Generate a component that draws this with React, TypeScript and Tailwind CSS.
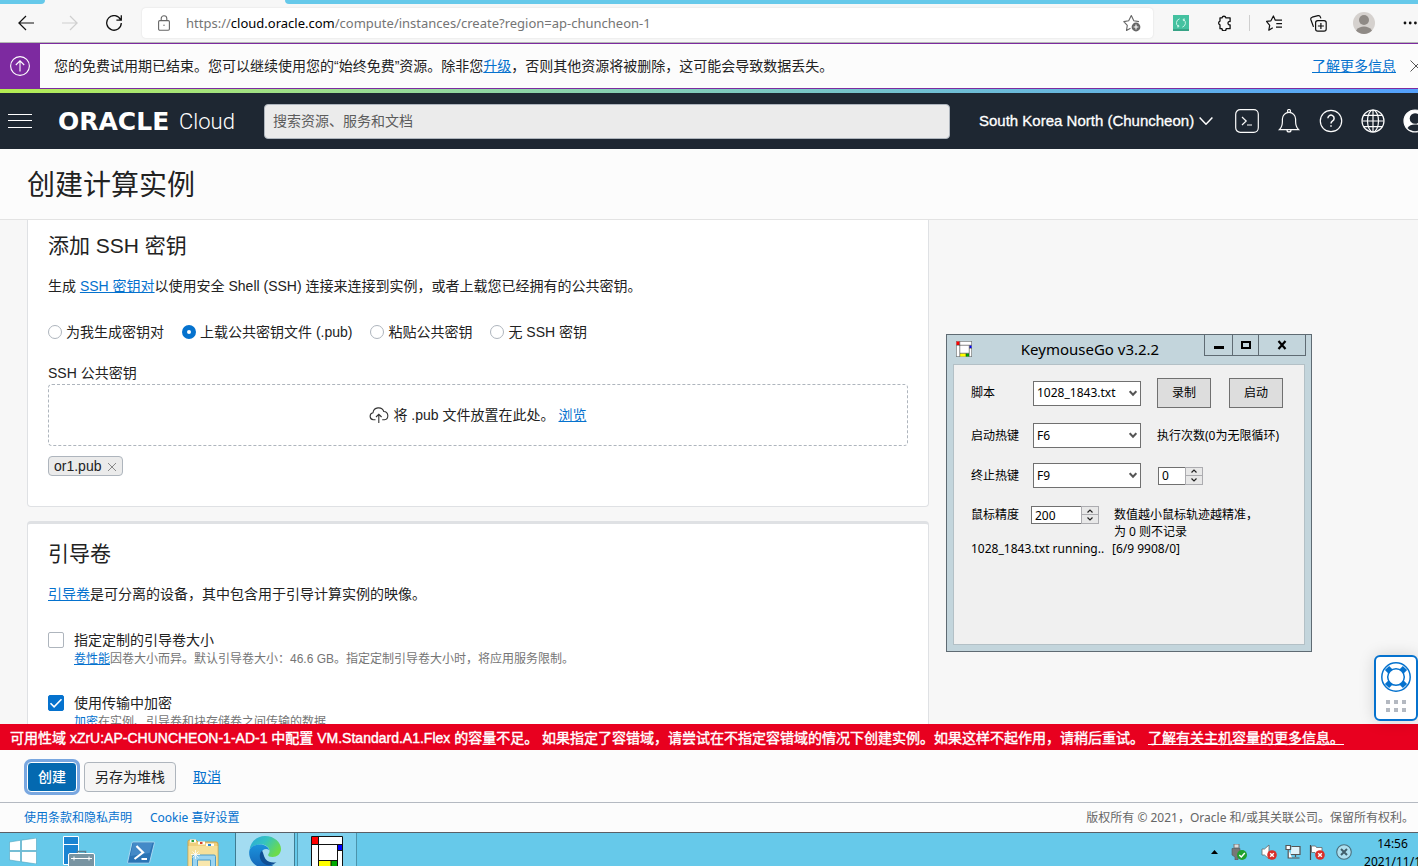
import { useState, type ReactNode } from "react";

const UI_FONT = "font-['Noto_Sans','Noto_Sans_CJK_SC',sans-serif]";

const KEY_OPTIONS = [
  { id: "generate", label: "为我生成密钥对" },
  { id: "upload", label: "上载公共密钥文件 (.pub)" },
  { id: "paste", label: "粘贴公共密钥" },
  { id: "none", label: "无 SSH 密钥" },
];

function BrowserBar() {
  return (
    <div className={`shrink-0 ${UI_FONT}`}>
      <div className="flex h-1 bg-[#f7f7f7]">
        <div className="w-[45px] rounded-br bg-[#66c9ea]" />
        <div className="w-[240px]" />
        <div className="flex-1 rounded-bl bg-[#66c9ea]" />
      </div>
      <div className="flex h-[39px] items-center border-b border-[#b4b9b4] bg-[#f7f7f7] pl-[18px]">
        <button type="button" aria-label="Back" className="mr-7">
          <svg className="size-4" viewBox="0 0 16 16" fill="none" stroke="#111" strokeWidth="1.2">
            <path d="M16 8H.8M8 1L.9 8l7.1 7" />
          </svg>
        </button>
        <button type="button" aria-label="Forward" className="mr-7">
          <svg className="size-4" viewBox="0 0 16 16" fill="none" stroke="#cfcfcf" strokeWidth="1.2">
            <path d="M0 8h15.2M8 1l7.1 7L8 15" />
          </svg>
        </button>
        <button type="button" aria-label="Refresh" className="mr-5">
          <svg className="size-4" viewBox="0 0 16 16" fill="none" stroke="#111" strokeWidth="1.3">
            <path d="M14.6 4.8A7.3 7.3 0 1 0 15.3 8M15.3.3v4.9h-4.9" />
          </svg>
        </button>
        <div className="flex h-[30px] min-w-0 flex-1 items-center rounded bg-white px-4 shadow-[0_0_2px_rgba(0,0,0,0.12)]">
          <svg className="mr-4 h-4 w-3 shrink-0" viewBox="0 0 12 16" fill="none" stroke="#666" strokeWidth="1.1">
            <rect x=".6" y="5.6" width="10.8" height="9.6" rx="1.2" />
            <path d="M3.2 5.5V3.6a2.8 2.8 0 0 1 5.6 0v1.9" />
            <circle cx="6" cy="10.2" r=".7" fill="#666" stroke="none" />
          </svg>
          <div className="min-w-0 flex-1 truncate text-[13px] leading-5 text-[#757575]">
            https://<span className="text-black">cloud.oracle.com</span>/compute/instances/create?region=ap-chuncheon-1
          </div>
          <button type="button" aria-label="Add to favorites" className="-mr-1">
            <svg className="size-[18px]" viewBox="0 0 18 18" fill="none" stroke="#666" strokeWidth="1.1">
              <path d="M7.5 14.2l-4 2.2.8-5L.8 7.6l4.9-.8L8.3 1.5l2.5 5.2 5.2.9" strokeLinejoin="round" />
              <circle cx="13" cy="13" r="4.4" fill="#666" stroke="none" />
              <path d="M13 10.6v4.8M10.6 13h4.8" stroke="#fff" />
            </svg>
          </button>
        </div>
        <div className="flex shrink-0 items-center pl-5">
          <button type="button" aria-label="Extension" className="mr-7">
            <svg className="size-4" viewBox="0 0 16 16" fill="none">
              <path d="M0 0h16v16H0z" fill="#44c1a0" />
              <path d="M0 14h16v2H0z" fill="#37a386" />
              <path d="M6.6 3.8A4.3 4.3 0 0 0 5.5 11.6M9.4 12.1A4.3 4.3 0 0 0 10.5 4.4M4 11.9l1.8-.1-.3-1.9M12 4.1l-1.8.1.3 1.9" stroke="#c9f5e7" strokeWidth="1" />
            </svg>
          </button>
          <button type="button" aria-label="Extensions" className="mr-4">
            <svg className="size-4" viewBox="0 0 16 16" fill="none" stroke="#111" strokeWidth="1.3" strokeLinejoin="round">
              <path d="M5 2.800a2 2 0 0 1 3.900 0h4.200v3.700a1.700 1.700 0 1 0 0 3.300v3.900H9.200a2.100 2.100 0 0 1-4.200 0H3V9.900a2 2 0 0 1 0-3.800V2.800z" />
            </svg>
          </button>
          <div className="mr-4 h-4 w-px bg-[#cfcfcf]" />
          <button type="button" aria-label="Favorites" className="mr-7">
            <svg className="size-4" viewBox="0 0 16 16" fill="none" stroke="#111" strokeWidth="1.2" strokeLinejoin="round">
              <path d="M6.8 12.7l-4 2.5.9-4.9L.5 6.400l4.400-.6L7.400 1l1.900 4.200H16M10.300 8.600H16M10 12.200h6" />
            </svg>
          </button>
          <button type="button" aria-label="Collections" className="mr-[26px]">
            <svg className="size-[17px]" viewBox="0 0 17 17" fill="none" stroke="#111" strokeWidth="1.2">
              <rect x="5.6" y="5.6" width="10.6" height="10.6" rx="2.2" />
              <path d="M10.9 8v6M7.9 11h6M3.5 11.9L.9 4.7a2 2 0 0 1 1.3-2.5L8 .7a2 2 0 0 1 2.4 1.4l.5 1.3" />
            </svg>
          </button>
          <button type="button" aria-label="Profile" className="mr-7">
            <svg className="size-[22px]" viewBox="0 0 22 22">
              <circle cx="11" cy="11" r="11" fill="#d5d1ce" />
              <circle cx="11" cy="8" r="5" fill="#8f8a86" />
              <path d="M3 18.5c2-3 5-4 8-4s6 1 8 4a11 11 0 0 1-16 0z" fill="#8f8a86" />
            </svg>
          </button>
          <button type="button" aria-label="Settings and more">
            <svg className="h-4 w-[15px]" viewBox="0 0 15 16" fill="#111">
              <circle cx="2" cy="8" r="1.4" />
              <circle cx="7.2" cy="8" r="1.4" />
              <circle cx="12.4" cy="8" r="1.4" />
            </svg>
          </button>
        </div>
      </div>
    </div>
  );
}

function TrialBanner() {
  return (
    <div className="flex h-[46px] shrink-0 items-center border-y border-[#7d2aa0] bg-[#fcfcfc]">
      <div className="flex w-10 shrink-0 items-center justify-center self-stretch bg-[#7d2aa0]">
        <svg className="size-5" viewBox="0 0 20 20" fill="none" stroke="#fff" strokeWidth="1.1">
          <circle cx="10" cy="10" r="9.4" />
          <path d="M10 15.5V5M5.8 9L10 4.8 14.2 9" />
        </svg>
      </div>
      <p className="min-w-0 flex-1 truncate pl-[14px] text-sm">
        您的免费试用期已结束。您可以继续使用您的“始终免费”资源。除非您
        <a href="#upgrade" className="text-[#0572ce] underline">升级</a>
        ，否则其他资源将被删除，这可能会导致数据丢失。
      </p>
      <a href="#learn-more" className="mr-3.5 shrink-0 text-sm text-[#0572ce] underline">了解更多信息</a>
      <button type="button" aria-label="关闭" className="-mr-1 shrink-0">
        <svg className="size-3" viewBox="0 0 12 12" fill="none" stroke="#555" strokeWidth="1">
          <path d="M.5.5l11 11M11.5.5l-11 11" />
        </svg>
      </button>
    </div>
  );
}

function NavIcon({ label, children }: { label: string; children: ReactNode }) {
  return (
    <button type="button" aria-label={label} className="shrink-0">
      <svg className="size-6" viewBox="0 0 24 24" fill="none" stroke="#fcfcfc" strokeWidth="1.2">
        {children}
      </svg>
    </button>
  );
}

function ConsoleHeader() {
  return (
    <header className="shrink-0">
      <div className="h-1 bg-linear-to-r from-[#b4ec51] to-[#53a0fd]" />
      <div className="flex h-14 items-center bg-[#1e2732] pl-2 text-white">
        <button type="button" aria-label="导航菜单" className="mr-[26px] shrink-0">
          <svg className="h-3.5 w-6" viewBox="0 0 24 14" stroke="#fff" strokeWidth="1">
            <path d="M0 .5h24M0 6.5h24M0 13.5h24" />
          </svg>
        </button>
        <a href="#home" className="flex w-[177px] shrink-0 items-center pt-0.5">
          <span className="w-[121px] font-['DejaVu_Sans',sans-serif] text-[25px] leading-6 font-bold">ORACLE</span>
          <span className="font-['Roboto',sans-serif] text-[22px] leading-6 font-light">Cloud</span>
        </a>
        <input
          type="search"
          aria-label="搜索"
          placeholder="搜索资源、服务和文档"
          className="ml-[29px] h-[35px] min-w-0 flex-1 rounded border border-[#aeb5bd] bg-[#ebebeb] px-2 text-sm text-[#222] placeholder:text-[#5c5c5c]"
        />
        <button type="button" className="ml-[29px] flex shrink-0 items-center gap-1 text-[15px]">
          <span className="w-[216px] text-left whitespace-nowrap [-webkit-text-stroke:0.3px_white]">South Korea North (Chuncheon)</span>
          <svg className="h-2 w-3.5" viewBox="0 0 14 8" fill="none" stroke="#fff" strokeWidth="1.5">
            <path d="M.6.6L7 7.2 13.4.6" />
          </svg>
        </button>
        <div className="-mr-[9px] ml-[22px] flex shrink-0 gap-[18px]">
          <NavIcon label="Cloud Shell">
            <rect x=".7" y=".7" width="22.6" height="22.6" rx="4.5" />
            <path d="M7 8l4.2 4L7 16M12 16h5" />
          </NavIcon>
          <NavIcon label="公告">
            <path d="M2.4 20.7c2-2 3-4 3-8.200V10a6.600 6.600 0 0 1 13.200 0v2.500c0 4.200 1 6.200 3 8.200zM10 20.900a2 2 0 0 0 4 0" />
            <circle cx="12" cy="2" r="1.500" />
          </NavIcon>
          <NavIcon label="帮助">
            <circle cx="12" cy="12" r="10.700" />
            <path d="M8.900 9.300a3.100 3.100 0 1 1 4.700 2.600c-1.100.700-1.600 1.200-1.600 2.600M12 16.200v1.600" strokeWidth="1.500" />
          </NavIcon>
          <NavIcon label="语言">
            <circle cx="12" cy="12" r="11" />
            <ellipse cx="12" cy="12" rx="5.500" ry="11" />
            <path d="M12 1v22M1 12h22M3 6.300h18M3 17.700h18" />
          </NavIcon>
          <NavIcon label="概要信息">
            <circle cx="12" cy="12" r="11" fill="#fff" />
            <circle cx="12" cy="9.500" r="5.300" fill="#1e2732" stroke="none" />
            <path d="M4.500 19c1.500-2.500 4-3.500 7.500-3.500s6 1 7.500 3.500a10.500 10.500 0 0 1-15 0z" fill="#1e2732" stroke="none" />
          </NavIcon>
        </div>
      </div>
    </header>
  );
}

function SshKeysCard() {
  const [selected, setSelected] = useState("upload");

  return (
    <section className="rounded-b border border-t-0 border-[#dfe1e4] bg-white px-5 pt-3 pb-[30px]">
      <h2 className="text-[21px] leading-7">添加 SSH 密钥</h2>
      <p className="mt-4">
        生成 <a href="#ssh-key-pair" className="text-[#0572ce] underline">SSH 密钥对</a>
        以使用安全 Shell (SSH) 连接来连接到实例，或者上载您已经拥有的公共密钥。
      </p>
      <div role="radiogroup" aria-label="SSH 密钥选项" className="mt-[26px] flex gap-[18px]">
        {KEY_OPTIONS.map((option) => (
          <label key={option.id} className="flex items-center gap-1">
            <input
              type="radio"
              name="ssh-key"
              value={option.id}
              checked={selected === option.id}
              onChange={() => setSelected(option.id)}
              className="size-3.5 appearance-none rounded-full border border-[#aeb5bd] bg-white checked:border-[5px] checked:border-[#0572ce]"
            />
            {option.label}
          </label>
        ))}
      </div>
      <p className="mt-[21px]">SSH 公共密钥</p>
      <div className="mt-px flex h-[62px] items-center justify-center rounded-sm border border-dashed border-[#aeb5bd]">
        <svg className="mr-1 h-4 w-5" viewBox="0 0 20 16" fill="none" stroke="#333" strokeWidth="1.1">
          <path d="M6.500 12.800H4.300A3.600 3.600 0 0 1 4 5.700 5.600 5.600 0 0 1 14.800 4.500a4.200 4.200 0 0 1 .700 8.300h-2.300M9.800 16V7.500M7 10l2.800-2.700L12.600 10" />
        </svg>
        <span>将 .pub 文件放置在此处。</span>
        <a href="#browse" className="ml-1 text-[#0572ce] underline">浏览</a>
      </div>
      <div className="mt-2.5 flex">
        <span className="flex h-5 items-center rounded-sm border border-[#aeb5bd] bg-[#ebebeb] px-[5px]">
          or1.pub
          <button type="button" aria-label="删除 or1.pub" className="ml-1.5">
            <svg className="mt-0.5 size-2.5" viewBox="0 0 10 10" stroke="#888" strokeWidth="1">
              <path d="M1 1l8 8M9 1L1 9" />
            </svg>
          </button>
        </span>
      </div>
    </section>
  );
}

function CheckRow({ id, label, initial, children }: { id: string; label: string; initial: boolean; children: ReactNode }) {
  const [checked, setChecked] = useState(initial);

  return (
    <div className="flex">
      <div className="relative mt-0.5 mr-2.5 size-4 shrink-0">
        <input
          id={id}
          type="checkbox"
          checked={checked}
          onChange={() => setChecked(!checked)}
          className="block size-4 appearance-none rounded-xs border border-[#aeb5bd] bg-white checked:border-[#0572ce] checked:bg-[#0572ce]"
        />
        {checked && (
          <svg className="pointer-events-none absolute inset-0" viewBox="0 0 16 16" fill="none" stroke="#fff" strokeWidth="1.6">
            <path d="M2.500 8.300l3.600 3.500 7.400-7.600" />
          </svg>
        )}
      </div>
      <div>
        <label htmlFor={id} className="block">{label}</label>
        <p className="text-xs leading-[18px] text-[#757575]">{children}</p>
      </div>
    </div>
  );
}

function BootVolumeCard() {
  return (
    <section className="mt-3.5 rounded-t border border-t-[3px] border-[#dfe1e4] bg-white px-5 pt-4 pb-[30px]">
      <h2 className="text-[21px] leading-7">引导卷</h2>
      <p className="mt-4">
        <a href="#boot-volume" className="text-[#0572ce] underline">引导卷</a>
        是可分离的设备，其中包含用于引导计算实例的映像。
      </p>
      <div className="mt-[26px] flex flex-col gap-[25px]">
        <CheckRow id="custom-size" label="指定定制的引导卷大小" initial={false}>
          <a href="#volume-performance" className="text-[#0572ce] underline">卷性能</a>
          因卷大小而异。默认引导卷大小：46.6 GB。指定定制引导卷大小时，将应用服务限制。
        </CheckRow>
        <CheckRow id="in-transit" label="使用传输中加密" initial>
          <a href="#encryption" className="text-[#0572ce] underline">加密</a>
          在实例、引导卷和块存储卷之间传输的数据
        </CheckRow>
      </div>
    </section>
  );
}

function KeymouseIcon({ className }: { className: string }) {
  return (
    <svg className={className} viewBox="0 0 32 32">
      <path d="M.5.5h31v31H.5z" fill="#fff" stroke="#111" />
      <path d="M1 1h6v7H1z" fill="#f00" />
      <path d="M27 9h4v5h-4z" fill="#00f" />
      <path d="M8 25h12v6H8z" fill="#ff0" />
      <path d="M20 25h6v6h-6z" fill="#00a800" />
      <path d="M7.500 1v30M26.500 9v22M1 8.500h30M8 24.500h18M26.500 14.500h5M20 25v6" stroke="#111" fill="none" />
    </svg>
  );
}

function WinSelect({ id, options }: { id: string; options: string[] }) {
  return (
    <div className="relative w-[108px] shrink-0">
      <select id={id} className="block h-[25px] w-full appearance-none border border-[#707070] bg-white pl-[3px]">
        {options.map((option) => (
          <option key={option}>{option}</option>
        ))}
      </select>
      <svg className="pointer-events-none absolute top-[9px] right-1 h-[7px] w-2" viewBox="0 0 8 7" fill="none" stroke="#555" strokeWidth="2">
        <path d="M.7 1.200L4 4.700l3.300-3.500" />
      </svg>
    </div>
  );
}

function Spinner({ id, initial, width }: { id: string; initial: number; width: string }) {
  const [value, setValue] = useState(initial);

  return (
    <div className={`flex h-[18px] shrink-0 ${width}`}>
      <input
        id={id}
        type="text"
        inputMode="numeric"
        value={value}
        onChange={(e) => setValue(Number(e.target.value) || 0)}
        className="min-w-0 flex-1 border border-r-0 border-[#707070] bg-white pl-[3px]"
      />
      <div className="flex w-[18px] flex-col border border-[#acacb0] bg-[#e8e8e8]">
        <button type="button" aria-label="增加" onClick={() => setValue(value + 1)} className="flex h-2 items-center justify-center border-b border-[#acacb0]">
          <svg className="h-1 w-1.5" viewBox="0 0 6 4" fill="none" stroke="#222" strokeWidth="1.200"><path d="M.5 3.500L3 1l2.500 2.500" /></svg>
        </button>
        <button type="button" aria-label="减少" onClick={() => setValue(Math.max(0, value - 1))} className="flex h-2 items-center justify-center">
          <svg className="h-1 w-1.5" viewBox="0 0 6 4" fill="none" stroke="#222" strokeWidth="1.200"><path d="M.5.500L3 3 5.500.500" /></svg>
        </button>
      </div>
    </div>
  );
}

function KeymouseWindow() {
  return (
    <div className={`absolute top-[114px] right-[106px] flex h-[318px] w-[366px] flex-col border border-[#5f6b73] bg-[#c3d5dc] px-1.5 pb-1.5 text-xs text-black ${UI_FONT}`}>
      <div className="flex h-[29px] shrink-0">
        <KeymouseIcon className="mt-1.5 ml-[3px] size-4 shrink-0" />
        <div className="flex-1 pt-1 pl-1 text-center text-[15px] leading-5">KeymouseGo v3.2.2</div>
        <div className="-mr-px flex h-[21px] w-[102px] shrink-0 border-x border-b border-[#5f6b73]">
          <button type="button" aria-label="最小化" className="flex w-[27px] items-center justify-center">
            <svg className="h-2.5 w-2.5" viewBox="0 0 10 10"><path d="M0 6h10v3H0z" /></svg>
          </button>
          <button type="button" aria-label="最大化" className="flex w-[27px] items-center justify-center border-x border-[#5f6b73]">
            <svg className="h-2.5 w-2.5" viewBox="0 0 10 10" fill="none" stroke="#000" strokeWidth="2"><path d="M1 2h8v6H1z" /></svg>
          </button>
          <button type="button" aria-label="关闭" className="flex flex-1 items-center justify-center">
            <svg className="h-2.5 w-2.5" viewBox="0 0 10 10" stroke="#000" strokeWidth="2.200"><path d="M1.500 1l7 8M8.500 1l-7 8" /></svg>
          </button>
        </div>
      </div>
      <div className="flex-1 border border-[#b3c0c6] bg-[#f0f0f0] pt-[13px] pl-[17px]">
        <div className="flex items-center">
          <label htmlFor="script" className="w-[62px] shrink-0">脚本</label>
          <WinSelect id="script" options={["1028_1843.txt"]} />
          <button type="button" className="ml-4 h-[30px] w-[54px] border border-[#707070] bg-[#dddddd]">录制</button>
          <button type="button" className="ml-[18px] h-[30px] w-[54px] border border-[#707070] bg-[#dddddd]">启动</button>
        </div>
        <div className="mt-[15px] flex items-center">
          <label htmlFor="start-key" className="w-[62px] shrink-0">启动热键</label>
          <WinSelect id="start-key" options={["F6"]} />
          <label htmlFor="run-count" className="ml-4 whitespace-nowrap">执行次数(0为无限循环)</label>
        </div>
        <div className="mt-[15px] flex items-center">
          <label htmlFor="stop-key" className="w-[62px] shrink-0">终止热键</label>
          <WinSelect id="stop-key" options={["F9"]} />
          <div className="ml-[17px]">
            <Spinner id="run-count" initial={0} width="w-[45px]" />
          </div>
        </div>
        <div className="mt-[18px] flex items-start leading-[17px]">
          <label htmlFor="precision" className="w-[60px] shrink-0">鼠标精度</label>
          <Spinner id="precision" initial={200} width="w-[68px]" />
          <p className="ml-[15px]">
            数值越小鼠标轨迹越精准，
            <br />
            为 0 则不记录
          </p>
        </div>
        <div className="flex leading-[18px]">
          <span className="w-[141px]">1028_1843.txt running..</span>
          <span>[6/9 9908/0]</span>
        </div>
      </div>
    </div>
  );
}

function HelpWidget() {
  return (
    <button
      type="button"
      aria-label="支持"
      className="absolute right-0 bottom-[3px] z-10 flex h-[66px] w-11 flex-col items-center rounded-md border-2 border-[#0572ce] bg-white pt-[5px] shadow-[0_0_16px_rgba(0,0,0,0.15)]"
    >
      <svg className="size-[30px]" viewBox="0 0 30 30" fill="none" stroke="#0572ce">
        <path d="M6 6l4.500 4.500M24 6l-4.500 4.500M6 24l4.500-4.500M24 24l-4.500-4.500" strokeWidth="6" />
        <circle cx="15" cy="15" r="14.200" strokeWidth="1.500" />
        <circle cx="15" cy="15" r="8.300" fill="#fff" strokeWidth="1.500" />
      </svg>
      <span className="mt-2 grid grid-cols-3 gap-1">
        {[0, 1, 2, 3, 4, 5].map((dot) => (
          <span key={dot} className="size-1 bg-[#b4b9c1]" />
        ))}
      </span>
    </button>
  );
}

function TaskButton({ label, className, children }: { label: string; className: string; children: ReactNode }) {
  return (
    <button type="button" aria-label={label} className={`flex h-[34px] shrink-0 items-start justify-center ${className}`}>
      {children}
    </button>
  );
}

function Taskbar() {
  return (
    <footer className={`flex h-[34px] shrink-0 overflow-hidden border-t border-[#5a5f66] bg-[#66c9ea] text-xs text-black ${UI_FONT}`}>
      <TaskButton label="开始" className="w-[46px] pt-[5px]">
        <svg className="h-[26px] w-7" viewBox="0 0 28 26" fill="#fff" stroke="#4ea4c0" strokeWidth=".6">
          <path d="M.5 4L11.500 2.300v10.200H.5zM12.500 2.200L27.500 0v12.500h-15zM.5 13.500h11v10.200L.5 22zM12.500 13.500h15V26l-15-2.200z" />
        </svg>
      </TaskButton>
      <TaskButton label="服务器管理器" className="w-[66px] pt-[3px]">
        <svg className="h-8 w-8" viewBox="0 0 32 32">
          <path d="M.5.500h15v28H.5z" fill="#1a84d2" stroke="#fff" />
          <path d="M.5 8.500h15" stroke="#fff" />
          <path d="M14.500 18v-2.500h8V18" fill="none" stroke="#5b7c8d" strokeWidth="1.500" />
          <rect x="5.500" y="17.500" width="26" height="16" rx="1.500" fill="#7894a2" stroke="#fff" />
          <path d="M8 22.500h21M11 20.500v4M26 20.500v4" stroke="#fff" fill="none" />
        </svg>
      </TaskButton>
      <TaskButton label="PowerShell" className="w-[58px] pt-2">
        <svg className="h-6 w-7" viewBox="0 0 28 24">
          <path d="M6 1h20.500q1.200 0 .9 1.200l-4.700 19q-.3 1-1.500 1H1.500q-1.200 0-.9-1.200l4.300-19Q5.200 1 6 1z" fill="#2b74b5" stroke="#a9d8f2" />
          <path d="M6 2h19.500l-3 10L3.500 15z" fill="#5398d3" opacity=".6" />
          <path d="M9.500 5l6.500 6.500L7.500 18M14.500 18H20" fill="none" stroke="#fff" strokeWidth="2.200" />
        </svg>
      </TaskButton>
      <TaskButton label="文件资源管理器" className="w-[65px] pt-[5px]">
        <svg className="h-8 w-8" viewBox="0 0 32 32">
          <path d="M1 32V3.500Q1 2 2.500 2H9l2 2h18q2 0 2 2v26z" fill="#efcf7c" stroke="#c9a24c" />
          <path d="M3 1.500h6v3H3z" fill="#fff" />
          <path d="M4.500 2H7v2H4.500z" fill="#2ba33c" />
          <path d="M11 3.500h7v3h-7z" fill="#fff" />
          <path d="M13 4h2.500v2H13z" fill="#d9432b" />
          <path d="M19 5.500h8v3h-8z" fill="#fff" />
          <path d="M21 6h3v2h-3z" fill="#2d8bd6" />
          <path d="M1.500 8h29v24h-29z" fill="#f6e09a" />
          <path d="M5.500 32V18.500Q5.500 17 7 17h20q1.500 0 1.500 1.500V32" fill="#9ad4f1" stroke="#4c9cc9" />
          <path d="M10.500 32V22h13v10" fill="#f9e7ad" stroke="#4c9cc9" />
          <path d="M8.500 12v9M4 16.500h9M5.500 13.500l6 6M11.500 13.500l-6 6" stroke="#fff" strokeWidth=".8" />
        </svg>
      </TaskButton>
      <TaskButton label="Microsoft Edge" className="w-[60px] border-x border-[#3f7c92] bg-[#a3dcf1] pt-[3px]">
        <svg className="h-8 w-8" viewBox="0 0 32 32">
          <defs>
            <linearGradient id="edge-top" x1="0" y1="0" x2="1" y2=".5">
              <stop offset="0" stopColor="#2aa5dc" />
              <stop offset=".5" stopColor="#34c3c0" />
              <stop offset="1" stopColor="#6cdb4b" />
            </linearGradient>
            <linearGradient id="edge-left" x1="0" y1="0" x2="0" y2="1">
              <stop offset="0" stopColor="#1c93dc" />
              <stop offset="1" stopColor="#1466b8" />
            </linearGradient>
          </defs>
          <path d="M.5 14C1.500 5.500 8 0 16 0c9.500 0 16 6.500 16 13 0 5-4 8-8.500 8-4 0-5-1.700-4-3 1-1.200 1.200-2.200 1-3.500C20 11 16.500 8.500 12.500 8.500 6 8.500 1.500 11 .5 14z" fill="url(#edge-top)" />
          <path d="M.2 16C.5 11.500 5 8.500 11 8.500c5 0 8.500 2.500 9.300 5.500-2-1.500-4.500-1.500-6.300 0-2.500 2.500-3 7 0 11 2.500 3.200 7 4.500 11 3.500-3 2.500-6 3.500-9 3.500C7 32-.3 25 .2 16z" fill="url(#edge-left)" />
          <path d="M13 14.500c-3 3-3 8 0 11.500 3.500 4 9.500 4.500 14.500 0-2 1-8 1-11-3-2-3-2-6-3.500-8.500z" fill="#0f4f94" />
        </svg>
      </TaskButton>
      <TaskButton label="KeymouseGo" className="ml-0.5 w-[60px] border-x border-[#4b93ab] bg-[#7dd1ee] pt-[3px]">
        <KeymouseIcon className="h-8 w-8" />
      </TaskButton>
      <div className="flex-1" />
      <div className="flex h-[38px] shrink-0 items-center">
        <svg className="mr-[13px] h-1 w-[7px]" viewBox="0 0 7 4"><path d="M0 4l3.500-4L7 4z" /></svg>
        <svg className="mr-3.5 h-4 w-4" viewBox="0 0 16 16">
          <path d="M3 0h5v4H3z" fill="#ddd" stroke="#777" />
          <path d="M1 4.500h8v6L7 13v3H4v-3l-3-2z" fill="#777" stroke="#555" strokeWidth=".6" />
          <circle cx="11" cy="11" r="5" fill="#1fa12e" />
          <path d="M8.300 11l2 2 3.500-4" fill="none" stroke="#fff" strokeWidth="1.400" />
        </svg>
        <svg className="mr-2 h-4 w-4" viewBox="0 0 16 16">
          <path d="M1 5h2.500L8 1v14l-4.500-4H1z" fill="#fff" stroke="#666" strokeWidth=".8" />
          <circle cx="11" cy="11" r="4.800" fill="#d9302a" />
          <path d="M9.200 9.200l3.600 3.600M12.800 9.200l-3.600 3.600" stroke="#fff" strokeWidth="1.400" />
        </svg>
        <svg className="mr-2 h-4 w-4" viewBox="0 0 16 16" fill="none" stroke="#555">
          <path d="M6.500 2.500h8.500v8H5.500" fill="#dff3fa" strokeWidth="1.200" />
          <path d="M1 1.500h4.500v4H1zM3.200 5.500v8.500h4M10.500 10.500V13M7 14h7.500" fill="#fff" strokeWidth="1.200" />
        </svg>
        <svg className="mr-[11px] h-4 w-4" viewBox="0 0 16 16">
          <path d="M1.500 1v15" stroke="#444" strokeWidth="1.200" />
          <path d="M2.500 2h4l1 1.500H13V10H7L6 8.500H2.500z" fill="#fff" stroke="#666" strokeWidth=".8" />
          <circle cx="11" cy="11" r="4.800" fill="#d9302a" />
          <path d="M9.200 9.200l3.600 3.600M12.800 9.200l-3.600 3.600" stroke="#fff" strokeWidth="1.400" />
        </svg>
        <svg className="mr-3 h-4 w-4" viewBox="0 0 16 16">
          <circle cx="8" cy="8" r="7.300" fill="#aee0f0" stroke="#4a6f7d" strokeWidth="1.100" />
          <path d="M5 5l6 6M11 5l-6 6" stroke="#42606c" strokeWidth="2" />
        </svg>
        <div className="-mr-[3px] self-start pt-0.5 text-center leading-[18px]">
          14:56
          <br />
          2021/11/1
        </div>
      </div>
    </footer>
  );
}

export default function App() {
  return (
    <div className="flex h-screen flex-col overflow-hidden bg-[#fcfcfc] font-['Liberation_Sans','Noto_Sans_CJK_SC',sans-serif] text-sm text-[#222]">
      <BrowserBar />
      <TrialBanner />
      <ConsoleHeader />
      <div className="shrink-0 border-b border-[#e3e3e3] px-[27px] pt-[17px] pb-[13px]">
        <h1 className="text-[28px] leading-10">创建计算实例</h1>
      </div>
      <div className="relative min-h-0 flex-1 bg-[#f7f7f7]">
        <main className="h-full overflow-hidden pl-[27px]">
          <div className="w-full max-w-[902px]">
            <SshKeysCard />
            <BootVolumeCard />
          </div>
        </main>
        <KeymouseWindow />
        <HelpWidget />
      </div>
      <div role="alert" className="h-[26px] shrink-0 truncate bg-[#e8001f] px-2.5 leading-7 text-white [-webkit-text-stroke:0.4px_white]">
        可用性域 xZrU:AP-CHUNCHEON-1-AD-1 中配置 VM.Standard.A1.Flex 的容量不足。 如果指定了容错域，请尝试在不指定容错域的情况下创建实例。如果这样不起作用，请稍后重试。{" "}
        <a href="#host-capacity" className="underline">了解有关主机容量的更多信息。</a>
      </div>
      <div className="flex shrink-0 items-center border-b border-[#b4b9c1] pt-3 pb-2.5 pl-[27px]">
        <button type="button" className="h-[30px] w-[50px] rounded-sm border border-white bg-[#0469b0] font-medium text-white ring-3 ring-[#79a7e0]">创建</button>
        <button type="button" className="ml-[7px] h-[30px] w-[92px] rounded-sm border border-[#aeb5bd] bg-[#f5f5f5]">另存为堆栈</button>
        <a href="#cancel" className="ml-[17px] text-[#0572ce] underline">取消</a>
      </div>
      <div className={`flex h-[29px] shrink-0 items-center gap-[18px] pt-px pr-1 pl-6 text-xs text-[#0572ce] ${UI_FONT}`}>
        <a href="#terms">使用条款和隐私声明</a>
        <a href="#cookies">Cookie 喜好设置</a>
        <p className="ml-auto text-[#666]">版权所有 © 2021，Oracle 和/或其关联公司。保留所有权利。</p>
      </div>
      <Taskbar />
    </div>
  );
}
